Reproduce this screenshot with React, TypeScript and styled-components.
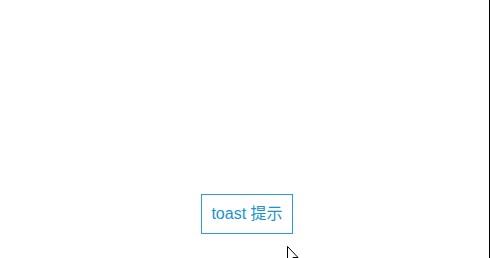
import React from 'react'
import styled, { createGlobalStyle } from 'styled-components'

const GlobalStyle = createGlobalStyle`
  html, body {
    margin: 0;
    padding: 0;
    background: #fff;
    overflow: hidden;
  }
  body {
    font-family: 'Liberation Sans', 'Noto Sans CJK SC', sans-serif;
  }
`

const Page = styled.div`
  position: relative;
  box-sizing: border-box;
  width: 490px;
  height: 258px;
  border-right: 1px solid #000;
  display: flex;
  flex-direction: column;
  justify-content: flex-end;
  align-items: center;
  padding: 0 0 24px 5px;
`

const ToastButton = styled.button`
  box-sizing: border-box;
  height: 40px;
  padding: 0 9px;
  border: 1px solid #2c9ed3;
  border-radius: 0;
  background: #fff;
  color: #1a93cf;
  font-family: 'Liberation Sans', 'Noto Sans CJK SC', sans-serif;
  font-size: 16px;
  line-height: 22px;
  cursor: pointer;
`

const Cursor = styled.svg`
  position: absolute;
  left: 286px;
  top: 245px;
`

const App: React.FC = () => {
  return (
    <>
      <GlobalStyle />
      <Page>
        <ToastButton>toast 提示</ToastButton>
        <Cursor width="14" height="20" viewBox="0 0 14 20">
          <path d="M1.5 1.5 L1.5 17 L5 13.5 L7.5 19 L9.5 18 L7 12.5 L12 12.5 Z" fill="#fff" stroke="#000" strokeWidth="1" />
        </Cursor>
      </Page>
    </>
  )
}

export default App
